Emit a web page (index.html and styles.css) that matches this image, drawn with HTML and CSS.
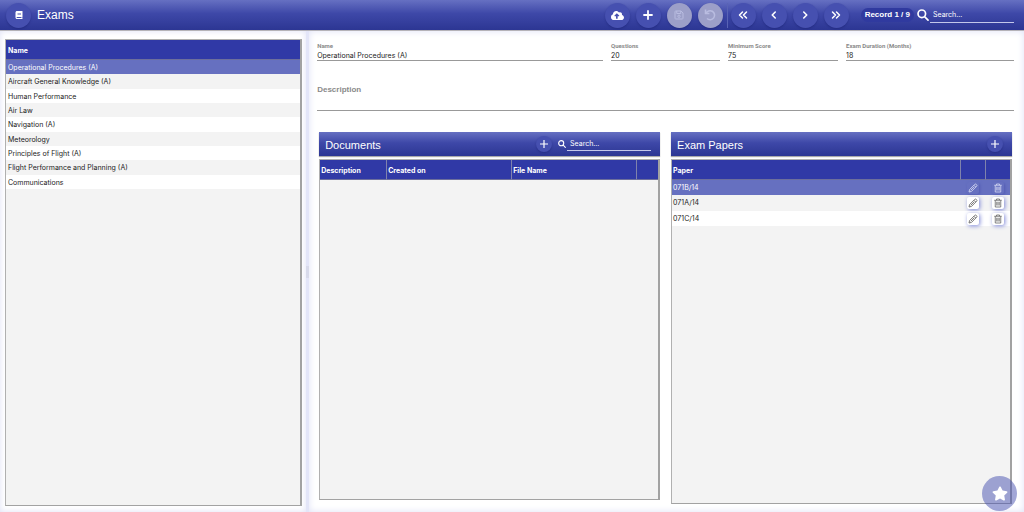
FILE: index.html
```html
<!DOCTYPE html>
<html lang="en">
<head>
<meta charset="utf-8">
<title>Exams</title>
<link rel="stylesheet" href="styles.css">
</head>
<body>
<svg class="sprite" aria-hidden="true">
  <symbol id="i-book" viewBox="0 0 448 512"><path fill="currentColor" d="M448 360V24c0-13.300-10.700-24-24-24H96C43 0 0 43 0 96v320c0 53 43 96 96 96h328c13.300 0 24-10.700 24-24v-16c0-7.500-3.500-14.300-8.900-18.700-4.200-15.400-4.200-59.300 0-74.700 5.400-4.300 8.900-11.100 8.900-18.600zM128 134c0-3.300 2.700-6 6-6h212c3.300 0 6 2.700 6 6v20c0 3.300-2.700 6-6 6H134c-3.300 0-6-2.700-6-6v-20zm0 64c0-3.300 2.700-6 6-6h212c3.300 0 6 2.700 6 6v20c0 3.300-2.700 6-6 6H134c-3.300 0-6-2.700-6-6v-20zm253.400 250H96c-17.700 0-32-14.300-32-32 0-17.600 14.400-32 32-32h285.400c-1.900 17.100-1.900 46.900 0 64z"/></symbol>
  <symbol id="i-upload" viewBox="0 0 640 512"><path fill="currentColor" d="M537.600 226.600c4.100-10.700 6.400-22.400 6.400-34.600 0-53-43-96-96-96-19.700 0-38.100 6-53.300 16.200C367 64.200 315.300 32 256 32c-88.400 0-160 71.600-160 160 0 2.700.1 5.400.2 8.100C40.200 219.800 0 273.200 0 336c0 79.500 64.500 144 144 144h368c70.700 0 128-57.300 128-128 0-61.900-44-113.600-102.400-125.400zM393.400 288H328v112c0 8.800-7.200 16-16 16h-48c-8.800 0-16-7.200-16-16V288h-65.400c-14.300 0-21.400-17.200-11.300-27.300l105.400-105.400c6.200-6.200 16.400-6.200 22.600 0l105.400 105.400c10.100 10.100 2.900 27.300-11.300 27.300z"/></symbol>
  <symbol id="i-plus" viewBox="0 0 20 20"><path d="M10 2v16M2 10h16" fill="none" stroke="currentColor" stroke-width="3.600" stroke-linecap="round"/></symbol>
  <symbol id="i-plus-thin" viewBox="0 0 20 20"><path d="M10 2v16M2 10h16" fill="none" stroke="currentColor" stroke-width="2.400"/></symbol>
  <symbol id="i-save" viewBox="0 0 20 20"><g fill="none" stroke="currentColor" stroke-width="2"><path d="M2 3.500Q2 2 3.500 2H14l4 4v10.500q0 1.500-1.500 1.500h-13Q2 18 2 16.500z"/><path d="M5.500 2v5h8V2"/><circle cx="10" cy="12.500" r="2.300"/></g></symbol>
  <symbol id="i-undo" viewBox="0 0 20 20"><path d="M2.500 1v6.500H9M3.200 7.500A7.500 7.500 0 1 1 5 15.800" fill="none" stroke="currentColor" stroke-width="2.600"/></symbol>
  <symbol id="i-first" viewBox="0 0 20 20"><path d="M9 4l-6 6 6 6M17 4l-6 6 6 6" fill="none" stroke="currentColor" stroke-width="3" stroke-linecap="round" stroke-linejoin="round"/></symbol>
  <symbol id="i-prev" viewBox="0 0 20 20"><path d="M12.500 4l-6 6 6 6" fill="none" stroke="currentColor" stroke-width="3.200" stroke-linecap="round" stroke-linejoin="round"/></symbol>
  <symbol id="i-next" viewBox="0 0 20 20"><path d="M7.500 4l6 6-6 6" fill="none" stroke="currentColor" stroke-width="3.200" stroke-linecap="round" stroke-linejoin="round"/></symbol>
  <symbol id="i-last" viewBox="0 0 20 20"><path d="M3 4l6 6-6 6M11 4l6 6-6 6" fill="none" stroke="currentColor" stroke-width="3" stroke-linecap="round" stroke-linejoin="round"/></symbol>
  <symbol id="i-search" viewBox="0 0 20 20"><g fill="none" stroke="currentColor" stroke-width="2.800" stroke-linecap="round"><circle cx="8" cy="8" r="6.300"/><path d="M13 13l5.400 5.400"/></g></symbol>
  <symbol id="i-pencil" viewBox="0 0 20 20"><g fill="none" stroke="currentColor" stroke-width="1.700" stroke-linejoin="round"><path d="M2 18l1.200-5L13.500 2.700q1.500-1.300 3 0l.8.800q1.300 1.500 0 3L7 16.800z"/><path d="M12 4.500L15.500 8M5.500 14.500l7-7"/></g></symbol>
  <symbol id="i-trash" viewBox="0 0 20 20"><g fill="none" stroke="currentColor" stroke-width="1.600"><path d="M2.500 4.500h15M7 4.500V2h6v2.500M4.500 4.500V18h11V4.500M7.500 7.500v7.500M10 7.500v7.500M12.500 7.500v7.500"/></g></symbol>
  <symbol id="i-star" viewBox="0 0 576 512"><path fill="currentColor" d="M259.300 17.800L194 150.200 47.900 171.500c-26.200 3.800-36.700 36.100-17.700 54.600l105.700 103-25 145.500c-4.500 26.300 23.200 46 46.400 33.700L288 439.600l130.700 68.700c23.200 12.200 50.900-7.400 46.400-33.700l-25-145.500 105.700-103c19-18.500 8.500-50.800-17.700-54.600L382 150.200 316.700 17.800c-11.700-23.600-45.600-23.900-57.400 0z"/></symbol>
</svg>

<header class="topbar">
  <span class="round"><svg class="icon icon-s"><use href="#i-book"/></svg></span>
  <h1 class="title">Exams</h1>
  <div class="group">
    <button class="round" aria-label="Upload"><svg class="icon icon-l"><use href="#i-upload"/></svg></button>
    <button class="round" aria-label="Add"><svg class="icon"><use href="#i-plus"/></svg></button>
    <button class="round" aria-label="Save" disabled><svg class="icon"><use href="#i-save"/></svg></button>
    <button class="round" aria-label="Undo" disabled><svg class="icon icon-m"><use href="#i-undo"/></svg></button>
  </div>
  <div class="group group-nav">
    <button class="round" aria-label="First record"><svg class="icon"><use href="#i-first"/></svg></button>
    <button class="round" aria-label="Previous record"><svg class="icon"><use href="#i-prev"/></svg></button>
    <button class="round" aria-label="Next record"><svg class="icon"><use href="#i-next"/></svg></button>
    <button class="round" aria-label="Last record"><svg class="icon"><use href="#i-last"/></svg></button>
  </div>
  <span class="record">Record 1 / 9</span>
  <label class="search"><svg class="icon icon-m" role="img" aria-label="Search"><use href="#i-search"/></svg><input type="search" placeholder="Search..."></label>
</header>

<div class="workspace">
  <aside class="sidebar">
    <div class="grid-box">
      <table class="table exams">
        <thead><tr><th>Name</th></tr></thead>
        <tbody>
          <tr class="selected"><td>Operational Procedures (A)</td></tr>
          <tr><td>Aircraft General Knowledge (A)</td></tr>
          <tr><td>Human Performance</td></tr>
          <tr><td>Air Law</td></tr>
          <tr><td>Navigation (A)</td></tr>
          <tr><td>Meteorology</td></tr>
          <tr><td>Principles of Flight (A)</td></tr>
          <tr><td>Flight Performance and Planning (A)</td></tr>
          <tr><td>Communications</td></tr>
        </tbody>
      </table>
    </div>
  </aside>
  <div class="splitter"><span class="grip"></span></div>
  <main class="detail">
    <form class="fields">
      <div class="field"><label for="name">Name</label><input id="name" value="Operational Procedures (A)"></div>
      <div class="field"><label for="questions">Questions</label><input id="questions" value="20"></div>
      <div class="field"><label for="score">Minimum Score</label><input id="score" value="75"></div>
      <div class="field"><label for="duration">Exam Duration (Months)</label><input id="duration" value="18"></div>
      <div class="field field-wide"><label for="description">Description</label><input id="description"></div>
    </form>
    <div class="panels">
      <section class="panel panel-docs">
        <div class="panel-head">
          <h2 class="panel-title">Documents</h2>
          <button class="round round-s" aria-label="Add document"><svg class="icon"><use href="#i-plus-thin"/></svg></button>
          <label class="search search-s"><svg class="icon icon-s" role="img" aria-label="Search"><use href="#i-search"/></svg><input type="search" placeholder="Search..."></label>
        </div>
        <div class="grid-box">
          <table class="table docs">
            <thead><tr><th class="c-desc">Description</th><th class="c-mid">Created on</th><th class="c-mid">File Name</th><th></th></tr></thead>
          </table>
        </div>
      </section>
      <section class="panel">
        <div class="panel-head">
          <h2 class="panel-title">Exam Papers</h2>
          <button class="round round-s" aria-label="Add paper"><svg class="icon"><use href="#i-plus-thin"/></svg></button>
        </div>
        <div class="grid-box">
          <table class="table papers">
            <thead><tr><th>Paper</th><th class="c-act"></th><th class="c-act"></th></tr></thead>
            <tbody>
              <tr class="selected"><td>071B/14</td><td><button class="mini" aria-label="Edit"><svg class="icon"><use href="#i-pencil"/></svg></button></td><td><button class="mini" aria-label="Delete"><svg class="icon"><use href="#i-trash"/></svg></button></td></tr>
              <tr><td>071A/14</td><td><button class="mini" aria-label="Edit"><svg class="icon"><use href="#i-pencil"/></svg></button></td><td><button class="mini" aria-label="Delete"><svg class="icon"><use href="#i-trash"/></svg></button></td></tr>
              <tr><td>071C/14</td><td><button class="mini" aria-label="Edit"><svg class="icon"><use href="#i-pencil"/></svg></button></td><td><button class="mini" aria-label="Delete"><svg class="icon"><use href="#i-trash"/></svg></button></td></tr>
            </tbody>
          </table>
        </div>
      </section>
    </div>
  </main>
</div>
<button class="fab" aria-label="Favourites"><svg class="icon icon-star"><use href="#i-star"/></svg></button>
</body>
</html>
```
FILE: styles.css
```css
* { box-sizing: border-box; }

body {
  margin: 0;
  height: 100vh;
  display: flex;
  flex-direction: column;
  font-family: Inter, "Liberation Sans", sans-serif;
  font-size: 7px;
  line-height: 10px;
  color: #222;
  background: #fff;
}

button, input { font: inherit; color: inherit; margin: 0; padding: 0; border: 0; background: none; }
h1, h2 { margin: 0; font-weight: 400; font-family: "Liberation Sans", Arial, sans-serif; color: #fff; }
.sprite { position: absolute; width: 0; height: 0; }
.icon { display: block; width: 10px; height: 10px; }
.icon-s { width: 8px; height: 8px; }
.icon-m { width: 12px; height: 12px; }
.icon-l { width: 13px; height: 11px; }
.icon-star { width: 16px; height: 15px; }

/* Top bar */
.topbar {
  display: flex;
  align-items: center;
  height: 31px;
  flex: none;
  padding: 0 10px 0 6px;
  color: #fff;
  background: linear-gradient(#6670c2, #3e48a8 45%, #2c3693);
  border-bottom: 1px solid #b5b3b8;
}
.title { flex: 1; margin-left: 6px; font-size: 12px; line-height: 16px; }
.round {
  display: flex;
  align-items: center;
  justify-content: center;
  width: 25px;
  height: 25px;
  flex: none;
  border-radius: 50%;
  color: #fff;
  background: #4650b0;
  box-shadow: 0 1px 2px rgba(20, 25, 100, 0.35);
}
.round:disabled { color: #b9bce0; background: #9c9fc8; }
.round-s { width: 16px; height: 16px; }
.group { display: flex; gap: 6px; }
.group-nav { margin-left: 4px; padding-left: 3px; border-left: 1px solid #5963b5; }
.record {
  margin-left: 12px;
  padding: 2px 4px;
  border-radius: 7px;
  font-family: "Liberation Sans", Arial, sans-serif;
  font-size: 8px;
  font-weight: 700;
  background: #303a9f;
}
.search { display: flex; align-items: center; margin-left: 3px; }
.search input {
  width: 84px;
  height: 15px;
  margin-left: 1px;
  padding-left: 3px;
  border-bottom: 1px solid #c3c7ea;
  outline: 0;
  appearance: none;
}
.search input::placeholder { color: #fff; opacity: 1; }

/* Workspace */
.workspace { flex: 1; display: flex; min-height: 0; }
.sidebar {
  display: flex;
  flex: 0 0 29.9%;
  padding: 8px 4px 6px 5px;
  box-shadow: inset 0 0 6px #dfe1f6;
}
.splitter { display: flex; align-items: center; width: 3px; flex: none; background: #e3e5f8; }
.grip { width: 3px; height: 12px; background: #d8daeb; }
.detail {
  flex: 1;
  display: flex;
  flex-direction: column;
  min-width: 0;
  padding: 10px 10px 8px 8px;
  box-shadow: inset 0 0 7px #dfe1f6;
}
.grid-box {
  flex: 1;
  min-height: 0;
  overflow: hidden;
  border: 1px solid #b0b0b0;
  border-right: 2px solid #a2a2a2;
  border-bottom-color: #a2a2a2;
  background: #f3f3f3;
}

/* Tables */
.table { width: 100%; border-collapse: separate; border-spacing: 0; table-layout: fixed; }
.table th {
  height: 20px;
  padding: 2px 1px 0;
  text-align: left;
  font-weight: 700;
  color: #fff;
  background: #3039a6;
  border-bottom: 1px solid #6d6f9c;
}
.table th + th { border-left: 1px solid #7f82ac; }
.table td { padding: 1px 1px 0; background: #fff; }
.table tr:nth-child(even) td { background: #f3f3f3; }
.table .selected td { color: #fff; background: #6670c0; }
.exams { height: 149px; }
.exams th, .exams td { padding: 2px 2px 0; }
.c-desc { width: 66px; }
.c-mid { width: 125px; }
.c-act { width: 25px; }
.papers { height: 66px; }
.mini {
  display: flex;
  align-items: center;
  justify-content: center;
  width: 12px;
  height: 12px;
  margin: 0 auto;
  border-radius: 2px;
  color: #666;
  background: #fff;
  box-shadow: 1px 1px 4px #7f88d6;
}
.selected .mini { color: #d5d8f2; background: #6670c0; box-shadow: 1px 1px 3px #525cb4; }

/* Form */
.fields { display: grid; grid-template-columns: 286fr 109fr 110fr 168fr; column-gap: 8px; }
.field { display: flex; flex-direction: column; min-width: 0; }
.field label { font-family: Roboto, sans-serif; font-size: 6px; line-height: 9px; font-weight: 700; color: #8a8a8a; }
.field input { width: 100%; height: 11px; border-bottom: 1px solid #999; outline: 0; }
.field-wide { grid-column: 1 / -1; margin-top: 22px; }
.field-wide label { font-size: 8px; line-height: 14px; font-family: "Liberation Sans", Arial, sans-serif; }
.field-wide input { height: 14px; }

/* Panels */
.panels {
  flex: 1;
  min-height: 0;
  display: grid;
  grid-template-columns: 1fr 1fr;
  column-gap: 11px;
  margin-top: 21px;
  padding: 0 2px;
}
.panel { display: flex; flex-direction: column; gap: 3px; min-width: 0; }
.panel-docs { padding-bottom: 4px; }
.panel-head {
  display: flex;
  align-items: center;
  height: 24px;
  padding: 0 9px 0 6px;
  color: #fff;
  background: linear-gradient(#6670c2, #3e48a8 45%, #2c3693);
  box-shadow: 0 1px 1px #aaa;
}
.panel-title { flex: 1; font-size: 11px; line-height: 14px; padding-top: 2px; }
.search-s { margin-left: 6px; }
.search-s input { height: 13px; }

/* Floating button */
.fab {
  position: fixed;
  right: 7px;
  bottom: 1px;
  display: flex;
  align-items: center;
  justify-content: center;
  width: 35px;
  height: 35px;
  border-radius: 50%;
  color: #fff;
  background: rgba(70, 80, 176, 0.5);
}
```
